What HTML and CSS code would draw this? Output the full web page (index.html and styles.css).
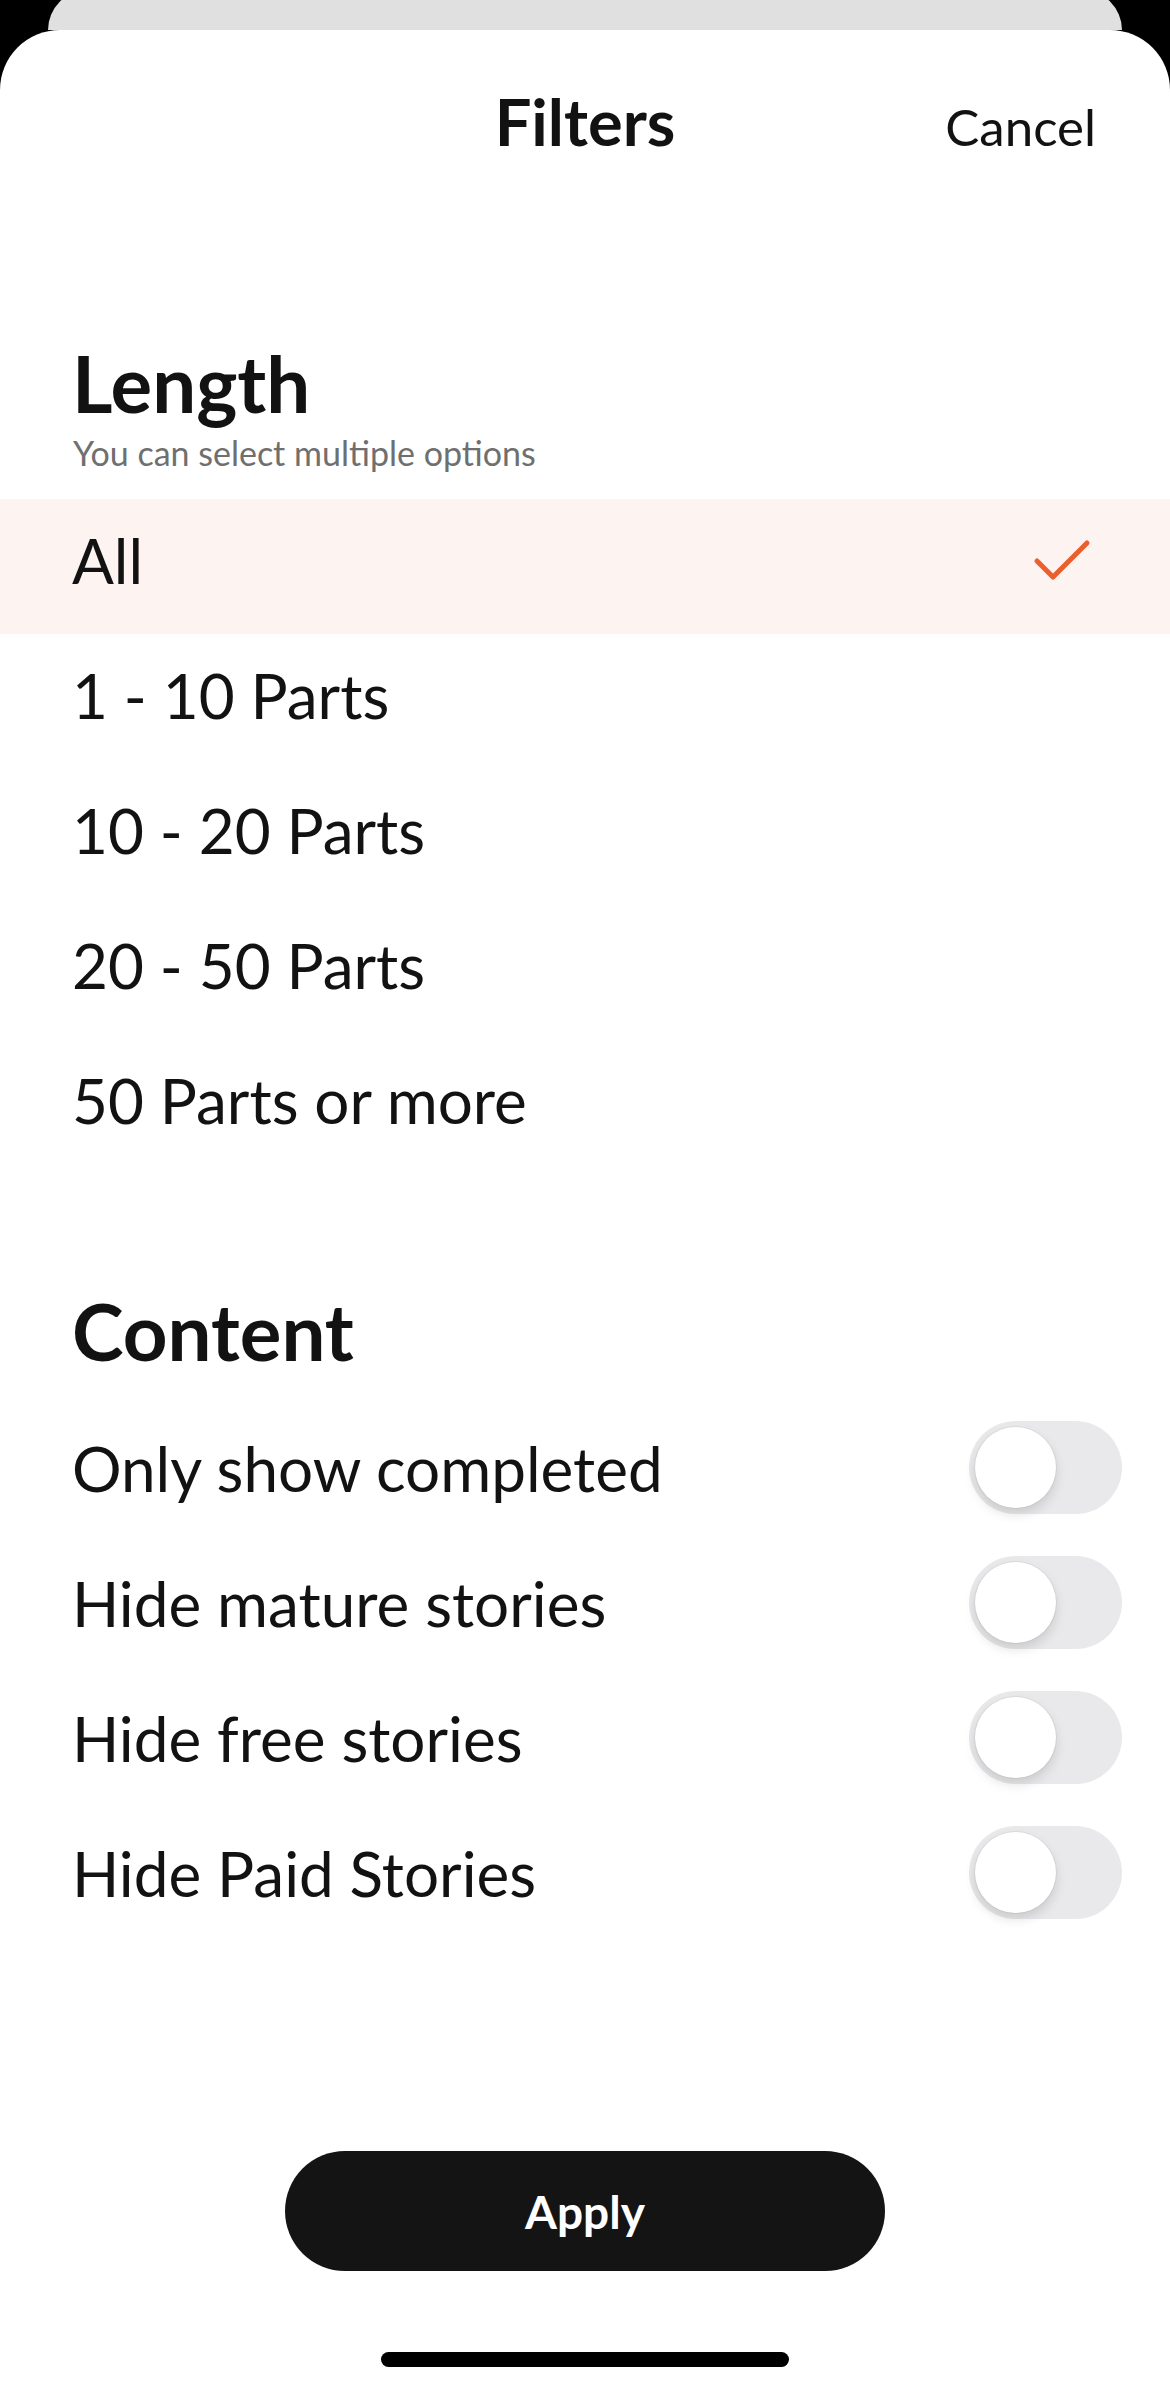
FILE: index.html
```html
<!DOCTYPE html>
<html lang="en">
<head>
<meta charset="utf-8">
<title>Filters</title>
<link rel="stylesheet" href="styles.css">
</head>
<body>
<div class="backcard"></div>
<main class="sheet">
  <header class="header">
    <span class="spacer"></span>
    <h1 class="title">Filters</h1>
    <span class="cancel">Cancel</span>
  </header>

  <section class="section">
    <h2 class="heading heading-length">Length</h2>
    <p class="subtitle">You can select multiple options</p>
    <ul class="options">
      <li class="option selected">
        <span>All</span>
        <svg class="check" viewBox="0 0 60 60" width="60" height="60" aria-hidden="true">
          <polyline points="5,24 21,40 55,6" fill="none" stroke="#ec5f2c" stroke-width="5" stroke-linecap="round" stroke-linejoin="round"/>
        </svg>
      </li>
      <li class="option"><span>1 - 10 Parts</span></li>
      <li class="option"><span>10 - 20 Parts</span></li>
      <li class="option"><span>20 - 50 Parts</span></li>
      <li class="option"><span>50 Parts or more</span></li>
    </ul>
  </section>

  <section class="section">
    <h2 class="heading heading-content">Content</h2>
    <ul class="toggles">
      <li class="toggle-row"><span>Only show completed</span><span class="switch"><span class="knob"></span></span></li>
      <li class="toggle-row"><span>Hide mature stories</span><span class="switch"><span class="knob"></span></span></li>
      <li class="toggle-row"><span>Hide free stories</span><span class="switch"><span class="knob"></span></span></li>
      <li class="toggle-row"><span>Hide Paid Stories</span><span class="switch"><span class="knob"></span></span></li>
    </ul>
  </section>

  <div class="footer">
    <button class="apply">Apply</button>
    <div class="home-indicator"></div>
  </div>
</main>
</body>
</html>
```
FILE: styles.css
```css
* { box-sizing: border-box; }
html, body {
  margin: 0;
  padding: 0;
}
body {
  width: 1170px;
  height: 2391px;
  overflow: hidden;
  background: #000;
  font-family: Lato, "Open Sans", sans-serif;
  color: #121212;
}
.backcard {
  height: 40px;
  margin: -10px 48px 0;
  background: #e0e0e0;
  border-radius: 40px 40px 0 0;
}
.sheet {
  height: 2361px;
  background: #fff;
  border-radius: 60px 60px 0 0;
  display: flex;
  flex-direction: column;
  padding-top: 51px;
}
.header {
  display: grid;
  grid-template-columns: 1fr auto 1fr;
  align-items: baseline;
}
.title {
  margin: 0;
  font-size: 65px;
  font-weight: 700;
  line-height: 80px;
  text-align: center;
}
.cancel {
  justify-self: end;
  padding-right: 74px;
  font-size: 51px;
  font-weight: 400;
  line-height: 80px;
}
.section { display: flex; flex-direction: column; }
.heading {
  margin: 0;
  padding-left: 72px;
  font-size: 78px;
  font-weight: 700;
  line-height: 90px;
}
.heading-length { margin-top: 171px; }
.heading-content { margin-top: 112px; }
.subtitle {
  margin: 5px 0 0;
  padding-left: 73px;
  font-size: 34px;
  line-height: 40px;
  color: #6f6f6f;
}
.options, .toggles {
  list-style: none;
  margin: 0;
  padding: 0;
}
.options { margin-top: 26px; }
.option, .toggle-row {
  height: 135px;
  display: flex;
  align-items: center;
  justify-content: space-between;
  padding: 0 78px 0 72px;
  font-size: 62px;
  line-height: 72px;
}
.option > span {
  margin-bottom: 14px;
}
.option.selected { background: #fdf4f1; }
.check { display: block; }
.toggles { margin-top: 24px; }
.toggle-row { padding-right: 48px; }
.switch {
  width: 153px;
  height: 93px;
  border-radius: 47px;
  background: #e9e9eb;
  padding: 6px;
  display: flex;
  align-items: center;
}
.knob {
  width: 81px;
  height: 81px;
  border-radius: 50%;
  background: #fff;
  box-shadow: 0 6px 12px rgba(0,0,0,0.13), 0 0 0 1px rgba(0,0,0,0.05);
}
.footer {
  margin-top: 211px;
  display: flex;
  flex-direction: column;
  align-items: center;
}
.apply {
  width: 600px;
  height: 120px;
  border: none;
  border-radius: 60px;
  background: #141414;
  color: #fff;
  font-family: Lato, "Open Sans", sans-serif;
  font-size: 46px;
  font-weight: 700;
}
.home-indicator {
  margin-top: 81px;
  width: 408px;
  height: 15px;
  border-radius: 8px;
  background: #000;
}
```
